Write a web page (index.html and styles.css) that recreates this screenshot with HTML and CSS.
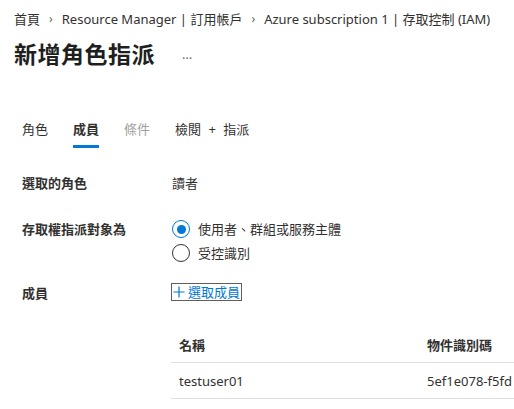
FILE: index.html
```html
<!DOCTYPE html>
<html lang="zh-Hant">
<head>
<meta charset="utf-8">
<title>新增角色指派</title>
<link rel="stylesheet" href="styles.css">
</head>
<body>
<div class="page">
  <nav class="breadcrumb">
    <span>首頁</span>
    <span class="chev">›</span>
    <span>Resource Manager | 訂用帳戶</span>
    <span class="chev">›</span>
    <span>Azure subscription 1 | 存取控制 (IAM)</span>
  </nav>
  <header class="title-row">
    <h1>新增角色指派</h1>
    <span class="more">…</span>
  </header>

  <div class="tabs">
    <span class="tab">角色</span>
    <span class="tab active">成員</span>
    <span class="tab disabled">條件</span>
    <span class="tab review">檢閱 + 指派</span>
  </div>

  <div class="form">
    <div class="row row-role">
      <div class="label">選取的角色</div>
      <div class="value">讀者</div>
    </div>
    <div class="row row-radios">
      <div class="label">存取權指派對象為</div>
      <div class="value radios">
        <label class="radio"><span class="dot checked"></span>使用者、群組或服務主體</label>
        <label class="radio"><span class="dot"></span>受控識別</label>
      </div>
    </div>
    <div class="row row-members">
      <div class="label">成員</div>
      <div class="value">
        <span class="select-link"><svg class="plus" width="12" height="12" viewBox="0 0 12 12"><path d="M6 0.5v11M0.5 6h11" stroke="#0078d4" stroke-width="1.2" fill="none"/></svg>選取成員</span>
      </div>
    </div>
  </div>

  <div class="table">
    <div class="trow thead">
      <div class="c-name">名稱</div>
      <div class="c-id">物件識別碼</div>
    </div>
    <div class="trow">
      <div class="c-name">testuser01</div>
      <div class="c-id">5ef1e078-f5fd</div>
    </div>
  </div>
</div>
</body>
</html>
```

FILE: styles.css
```css
html, body {
  margin: 0;
  padding: 0;
  background: #ffffff;
}

body {
  font-family: "Noto Sans", "Noto Sans CJK TC", sans-serif;
  color: #323130;
  font-size: 13px;
  overflow: hidden;
}

.page {
  width: 514px;
  height: 409px;
  overflow: hidden;
}

.breadcrumb {
  display: flex;
  align-items: center;
  gap: 7px;
  padding: 8px 0 0 14px;
  height: 20px;
  font-size: 13px;
  white-space: nowrap;
}

.breadcrumb .chev {
  color: #605e5c;
  font-size: 12px;
  padding: 0 2px;
}

.title-row {
  display: flex;
  align-items: center;
  padding: 10px 0 0 14px;
  height: 30px;
}

.title-row h1 {
  margin: 0;
  font-size: 23px;
  font-weight: 700;
  color: #201f1e;
  letter-spacing: 0.5px;
}

.more {
  margin-left: 27px;
  font-size: 13px;
  color: #605e5c;
  position: relative;
  top: 1px;
}

.tabs {
  display: flex;
  gap: 25px;
  padding: 50px 0 0 22px;
}

.tab {
  font-size: 13px;
  line-height: 22px;
  padding-bottom: 5px;
  border-bottom: 3px solid transparent;
}

.tab.active {
  font-weight: 700;
  border-bottom-color: #0078d4;
}

.tab.disabled {
  color: #a19f9d;
}

.tab.review {
  word-spacing: 4px;
}

.form {
  padding: 25px 0 0 22px;
}

.row {
  display: flex;
  align-items: flex-start;
}

.row-role {
  min-height: 46px;
}

.row-radios {
  min-height: 64px;
}

.row-members {
  min-height: 20px;
}

.label {
  width: 150px;
  font-weight: 600;
  line-height: 20px;
  color: #323130;
}

.value {
  line-height: 20px;
}

.radios {
  display: flex;
  flex-direction: column;
  gap: 4px;
}

.radio {
  display: flex;
  align-items: center;
  gap: 8px;
}

.dot {
  width: 16px;
  height: 16px;
  border: 1.5px solid #323130;
  border-radius: 50%;
  position: relative;
  flex: none;
}

.dot.checked {
  border-color: #0078d4;
}

.dot.checked::after {
  content: "";
  position: absolute;
  left: 3.5px;
  top: 3.5px;
  width: 9px;
  height: 9px;
  border-radius: 50%;
  background: #0078d4;
}

.select-link {
  display: inline-flex;
  align-items: center;
  gap: 3px;
  color: #0078d4;
  border: 1px solid #605e5c;
  padding: 0 1px;
  margin-left: -1px;
  line-height: 16px;
}

.table {
  margin: 24px 0 0 171px;
}

.trow {
  display: flex;
  height: 35px;
  align-items: center;
  border-bottom: 1px solid #e1dfdd;
}

.trow.thead {
  font-weight: 600;
}

.c-name {
  width: 248px;
  padding-left: 8px;
}

.c-id {
  white-space: nowrap;
}
```
